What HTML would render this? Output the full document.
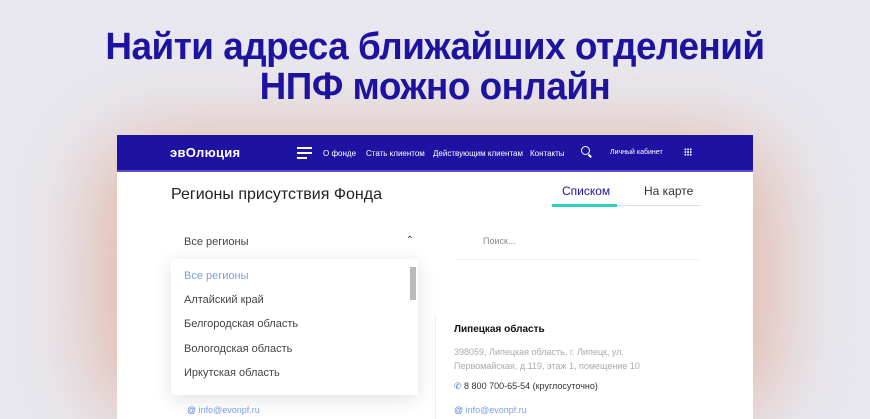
<!DOCTYPE html>
<html><head><meta charset="utf-8"><style>
*{margin:0;padding:0;box-sizing:border-box}
html,body{width:870px;height:419px;overflow:hidden}
body{background:#e8e7ef;font-family:"Liberation Sans",sans-serif;position:relative}
.glow{position:absolute;left:95px;top:135px;width:680px;height:284px;border-radius:60px;background:#e2b4a0;filter:blur(40px);opacity:.9}
h1{position:absolute;top:27px;left:0;width:870px;text-align:center;color:#1d139e;font-size:38px;line-height:40px;font-weight:bold;letter-spacing:-0.5px;transform:scaleX(.97)}
.card{position:absolute;left:117px;top:135px;width:636px;height:284px;background:#fff;overflow:hidden}
.hdr{height:37px;background:#1e12a3;border-bottom:2px solid #5b50c8;color:#fff;position:relative;font-size:8px}
.hdr span{position:absolute;top:14px}
.logo{left:53px;top:10px!important;font-size:13px;font-weight:bold;letter-spacing:.3px}
.t{position:absolute;font-size:16px;color:#222;left:54px;top:51px}
.tab{position:absolute;top:49px;font-size:12px}
.dd{position:absolute;left:54px;top:94px;width:238px;height:30px;font-size:11px;color:#444;padding:7px 13px}
.list{position:absolute;left:54px;top:124px;width:247px;height:136px;background:#fff;box-shadow:0 4px 18px rgba(0,0,0,.12);font-size:11px;color:#444}
.list div{position:absolute;left:13px}
.r{position:absolute;font-size:9px}
</style></head><body>
<div class="glow"></div>
<h1>Найти адреса ближайших отделений<br>НПФ можно онлайн</h1>
<div class="card">
 <div class="hdr">
  <span class="logo">эвОлюция</span>
  <span style="left:180px;top:12px;width:15px;height:2px;background:#fff"></span>
  <span style="left:180px;top:17px;width:15px;height:2px;background:#fff"></span>
  <span style="left:180px;top:22px;width:10px;height:2px;background:#fff"></span>
  <span style="left:206px">О фонде</span>
  <span style="left:249px">Стать клиентом</span>
  <span style="left:316px">Действующим клиентам</span>
  <span style="left:413px">Контакты</span>
  <span style="left:464px;top:11px;width:9px;height:9px;border:1.5px solid #fff;border-radius:50%"></span>
  <span style="left:471px;top:20px;width:4px;height:1.5px;background:#fff;transform:rotate(45deg)"></span>
  <span style="left:493px;font-size:7px">Личный кабинет</span>
  <span style="left:567px;top:13px;width:8px;height:8px;background:radial-gradient(circle,#fff 0.8px,transparent 1.1px) 0 0/2.7px 2.7px"></span>
 </div>
 <div class="t">Регионы присутствия Фонда</div>
 <div class="tab" style="left:445px;color:#1e12a3">Списком</div>
 <div class="tab" style="left:527px;color:#333">На карте</div>
 <div style="position:absolute;left:435px;top:69px;width:65px;height:3px;background:#2ed0c0"></div>
 <div style="position:absolute;left:500px;top:70px;width:83px;height:1px;background:#ddd"></div>
 <div class="dd">Все регионы<span style="position:absolute;right:-5px;top:6px;font-size:10px">&#8963;</span></div>
 <div style="position:absolute;left:366px;top:101px;font-size:9px;color:#888">Поиск...</div>
 <div style="position:absolute;left:338px;top:124px;width:245px;height:1px;background:#f0f0f0"></div>
 <div style="position:absolute;left:318px;top:180px;width:1px;height:120px;background:#eee"></div>
 <div class="list">
  <div style="top:11px;color:#7a9fe0">Все регионы</div>
  <div style="top:35px">Алтайский край</div>
  <div style="top:59px">Белгородская область</div>
  <div style="top:84px">Вологодская область</div>
  <div style="top:108px">Иркутская область</div>
  <div style="left:239px;top:8px;width:6px;height:33px;background:#bbb"></div>
 </div>
 <div class="r" style="left:337px;top:189px;font-weight:bold;color:#111;font-size:10px">Липецкая область</div>
 <div class="r" style="left:337px;top:210px;color:#aaa;line-height:14px">398059, Липецкая область, г. Липецк, ул.<br>Первомайская, д.119, этаж 1, помещение 10</div>
 <div class="r" style="left:337px;top:246px;color:#333"><span style="color:#4a7fe0">&#9990;</span> 8 800 700-65-54 (круглосуточно)</div>
 <div class="r" style="left:337px;top:270px;color:#7a9fe0"><span style="color:#4a7fe0">@</span> info@evonpf.ru</div>
 <div class="r" style="left:70px;top:270px;color:#7a9fe0"><span style="color:#4a7fe0">@</span> info@evonpf.ru</div>
</div>
</body></html>
